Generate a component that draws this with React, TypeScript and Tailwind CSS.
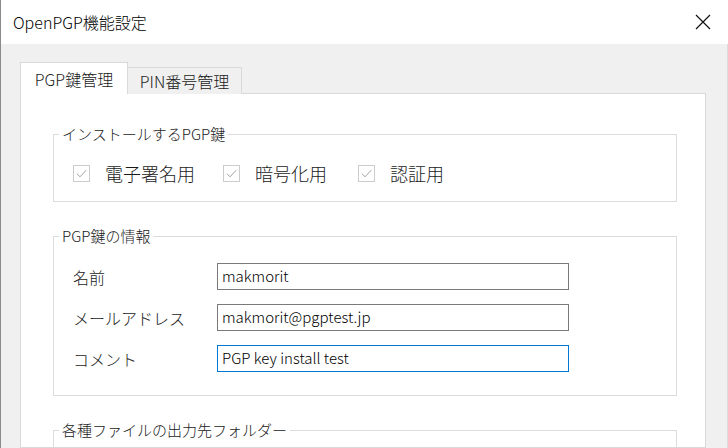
import React from 'react';

const jp = { fontFamily: '"Noto Sans CJK JP", "Noto Sans", sans-serif' };

const CheckItem: React.FC<{ label: string; width: string }> = ({ label, width }) => (
  <div className={`flex items-center gap-[15px] ${width}`}>
    <div className="w-[17px] h-[17px] border border-[#cccccc] bg-white flex items-center justify-center">
      <svg width="13" height="13" viewBox="0 0 13 13" fill="none">
        <path d="M2 6.8 L5 9.8 L11.2 3.2" stroke="#a0a0a0" strokeWidth="1" />
      </svg>
    </div>
    <span className="text-[18px] leading-5 text-[#1a1a1a]">{label}</span>
  </div>
);

const Field: React.FC<{ label: string; value: string; focused?: boolean }> = ({ label, value, focused }) => (
  <div className="flex items-center">
    <span className="w-[144px] shrink-0 text-[16px] text-[#1a1a1a]">{label}</span>
    <div
      className={`w-[352px] h-[27px] shrink-0 border bg-white flex items-center px-[4px] text-[15px] text-black ${
        focused ? 'border-[#0078d7]' : 'border-[#7a7a7a]'
      }`}
    >
      {value}
    </div>
  </div>
);

const App: React.FC = () => {
  return (
    <div className="w-[728px] h-[448px] overflow-hidden flex flex-col bg-[#f0f0f0] border-l border-[#8a8a8a] font-light" style={jp}>
      {/* Title bar */}
      <div className="h-[44px] shrink-0 bg-white flex items-center justify-between pl-[12px] pr-[17px]">
        <span className="text-[16px] text-black">OpenPGP機能設定</span>
        <svg width="16" height="16" viewBox="0 0 16 16" fill="none">
          <path d="M1 1 L15 15 M15 1 L1 15" stroke="#111" strokeWidth="1.2" />
        </svg>
      </div>

      {/* Body */}
      <div className="flex-1 min-h-0 flex flex-col pt-[18px] pl-[19px] pr-[21px] border-r border-[#dcdcdc]">
        {/* Tabs */}
        <div className="flex items-end h-[32px] shrink-0 relative z-10">
          <div className="w-[108px] h-[32px] bg-white border border-b-0 border-[#d9d9d9] flex items-center justify-center text-[16px] text-[#1a1a1a]">
            PGP鍵管理
          </div>
          <div className="w-[114px] h-[27px] bg-[#f0f0f0] border border-l-0 border-b-0 border-[#d9d9d9] flex items-center justify-center text-[16px] text-[#1a1a1a]">
            PIN番号管理
          </div>
        </div>

        {/* Panel */}
        <div className="flex-1 min-h-0 bg-white border border-[#d9d9d9] -mt-px pl-[32px] pr-[28px] pt-[30px] flex flex-col gap-[24px]">
          <fieldset className="shrink-0 border border-[#dcdcdc] pl-[19px] pt-[19px] pb-[18px]">
            <legend className="ml-[-14px] px-[3px] text-[15px] leading-5 text-[#1a1a1a]">インストールするPGP鍵</legend>
            <div className="flex items-center h-5">
              <CheckItem label="電子署名用" width="w-[150px]" />
              <CheckItem label="暗号化用" width="w-[135px]" />
              <CheckItem label="認証用" width="w-[120px]" />
            </div>
          </fieldset>

          <fieldset className="shrink-0 border border-[#dcdcdc] pl-[19px] pt-[17px] pb-[23px]">
            <legend className="ml-[-14px] px-[3px] text-[15px] leading-5 text-[#1a1a1a]">PGP鍵の情報</legend>
            <div className="flex flex-col gap-[14px]">
              <Field label="名前" value="makmorit" />
              <Field label="メールアドレス" value="makmorit@pgptest.jp" />
              <Field label="コメント" value="PGP key install test" focused />
            </div>
          </fieldset>

          <fieldset className="shrink-0 border border-[#dcdcdc] pl-[19px] pt-[15px] pb-[25px] h-[80px]">
            <legend className="ml-[-14px] px-[3px] text-[15px] leading-5 text-[#1a1a1a]">各種ファイルの出力先フォルダー</legend>
          </fieldset>
        </div>
      </div>
    </div>
  );
};

export default App;
